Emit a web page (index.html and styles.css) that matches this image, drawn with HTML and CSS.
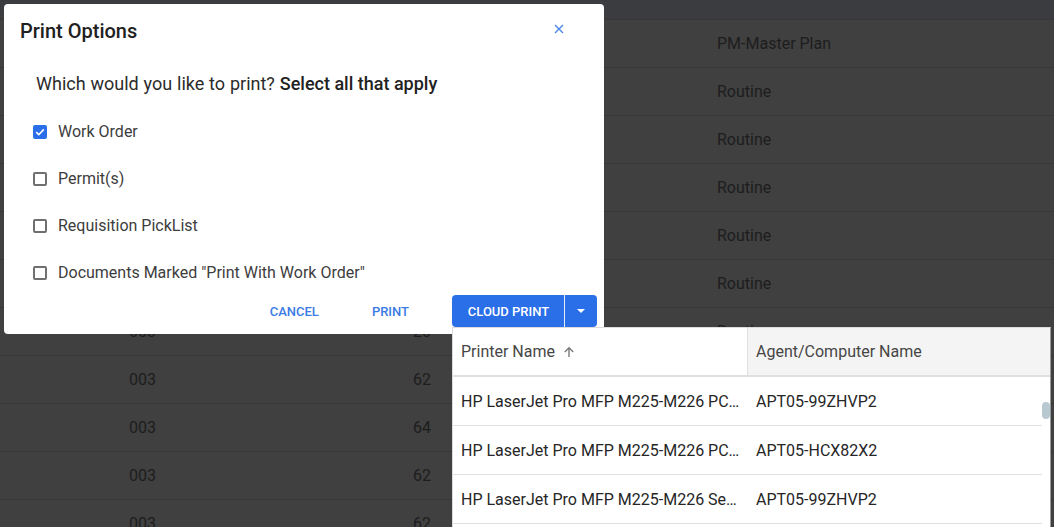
FILE: index.html
```html
<!DOCTYPE html>
<html lang="en">
<head>
<meta charset="utf-8">
<title>Print Options</title>
<link rel="stylesheet" href="styles.css">
</head>
<body>
<div class="page">
  <div class="bg-head"></div>
  <div class="bg-table">
    <div class="bg-row"><span></span><span></span><span class="num"></span><span></span><span>PM-Master Plan</span></div>
    <div class="bg-row"><span></span><span></span><span class="num"></span><span></span><span>Routine</span></div>
    <div class="bg-row"><span></span><span></span><span class="num"></span><span></span><span>Routine</span></div>
    <div class="bg-row"><span></span><span></span><span class="num"></span><span></span><span>Routine</span></div>
    <div class="bg-row"><span></span><span></span><span class="num"></span><span></span><span>Routine</span></div>
    <div class="bg-row"><span></span><span></span><span class="num"></span><span></span><span>Routine</span></div>
    <div class="bg-row"><span></span><span>003</span><span class="num">20</span><span></span><span>Routine</span></div>
    <div class="bg-row"><span></span><span>003</span><span class="num">62</span><span></span><span></span></div>
    <div class="bg-row"><span></span><span>003</span><span class="num">64</span><span></span><span></span></div>
    <div class="bg-row"><span></span><span>003</span><span class="num">62</span><span></span><span></span></div>
    <div class="bg-row"><span></span><span>003</span><span class="num">62</span><span></span><span></span></div>
  </div>

  <div class="dialog">
    <div class="dialog-head">
      <h2 class="dialog-title">Print Options</h2>
      <button class="close-btn" aria-label="Close">
        <svg width="10" height="10" viewBox="0 0 10 10"><path d="M1 1L9 9M9 1L1 9" stroke="#4a87e8" stroke-width="1.4" fill="none"/></svg>
      </button>
    </div>
    <p class="question">Which would you like to print? <strong>Select all that apply</strong></p>
    <ul class="options">
      <li class="option">
        <span class="box checked"><svg width="14" height="14" viewBox="0 0 14 14"><path d="M3.2 7.2L5.8 9.7L10.8 4.4" stroke="#fff" stroke-width="1.6" fill="none"/></svg></span>
        <span class="label">Work Order</span>
      </li>
      <li class="option"><span class="box"></span><span class="label">Permit(s)</span></li>
      <li class="option"><span class="box"></span><span class="label">Requisition PickList</span></li>
      <li class="option"><span class="box"></span><span class="label">Documents Marked "Print With Work Order"</span></li>
    </ul>
    <div class="actions">
      <button class="text-btn cancel">Cancel</button>
      <button class="text-btn print">Print</button>
      <div class="split">
        <button class="split-main">Cloud Print</button>
        <button class="split-toggle" aria-label="More"><span class="caret"></span></button>
      </div>
    </div>
  </div>

  <div class="printer-panel">
    <div class="p-head">
      <div class="p-cell p-name">Printer Name
        <svg class="sort" width="12" height="12" viewBox="0 0 12 12"><path d="M6 11V1.8M1.8 6L6 1.8L10.2 6" stroke="#7a7a7a" stroke-width="1.4" fill="none"/></svg>
      </div>
      <div class="p-cell p-agent">Agent/Computer Name</div>
    </div>
    <div class="p-body">
      <div class="p-row"><div class="p-cell p-name"><span class="trunc">HP LaserJet Pro MFP M225-M226 PCL 6</span></div><div class="p-cell p-agent">APT05-99ZHVP2</div></div>
      <div class="p-row"><div class="p-cell p-name"><span class="trunc">HP LaserJet Pro MFP M225-M226 PCL 6</span></div><div class="p-cell p-agent">APT05-HCX82X2</div></div>
      <div class="p-row"><div class="p-cell p-name"><span class="trunc">HP LaserJet Pro MFP M225-M226 Series</span></div><div class="p-cell p-agent">APT05-99ZHVP2</div></div>
      <div class="thumb"></div>
    </div>
  </div>
</div>
</body>
</html>
```
FILE: styles.css
```css
* { box-sizing: border-box; }
html, body { margin: 0; padding: 0; }
body {
  width: 1054px;
  height: 527px;
  overflow: hidden;
  background: #404040;
  font-family: Roboto, "Liberation Sans", Arial, sans-serif;
}
.page {
  position: relative;
  width: 1054px;
  height: 527px;
  overflow: hidden;
}
.bg-head {
  height: 19px;
  background: #3b3c3f;
}
.bg-row {
  display: grid;
  grid-template-columns: 129px 200px 102px 286px 1fr;
  align-items: center;
  height: 48px;
  border-top: 1px solid #373737;
  font-size: 16px;
  color: #1d1d1d;
}
.bg-row .num { text-align: right; }

/* Dialog */
.dialog {
  position: absolute;
  left: 4px;
  top: 4px;
  width: 600px;
  height: 330px;
  background: #fff;
  border-radius: 4px;
}
.dialog-head {
  display: flex;
  justify-content: space-between;
  align-items: flex-start;
  padding: 15px 33px 0 16px;
}
.dialog-title {
  margin: 0;
  font-size: 20px;
  line-height: 24px;
  font-weight: 500;
  color: #212121;
}
.close-btn {
  width: 24px;
  height: 24px;
  margin-top: -2px;
  padding: 0;
  border: 0;
  background: none;
  display: flex;
  align-items: center;
  justify-content: center;
}
.question {
  margin: 29px 0 12px 32px;
  font-size: 18px;
  line-height: 24px;
  color: #2b2b2b;
  word-spacing: 0.4px;
}
.question strong { font-weight: 500; color: #222; word-spacing: 0; }
.options {
  list-style: none;
  margin: 0;
  padding: 0 0 0 29px;
}
.option {
  display: flex;
  align-items: center;
  gap: 11px;
  height: 47px;
}
.box {
  width: 14px;
  height: 14px;
  border: 2px solid #707070;
  border-radius: 2px;
  flex: none;
}
.box.checked {
  border: 0;
  background: #2b6fe8;
  display: flex;
}
.label {
  font-size: 16px;
  color: #3d3d3d;
}
.actions {
  display: flex;
  justify-content: flex-end;
  align-items: center;
  margin-top: -1px;
  padding-right: 7px;
}
.text-btn {
  height: 32px;
  border: 0;
  background: none;
  font-family: inherit;
  font-size: 13px;
  font-weight: 500;
  text-transform: uppercase;
  color: #3b7be4;
  padding: 0 16px;
}
.cancel { margin-right: 21px; }
.print { margin-right: 27px; }
.split {
  display: flex;
  height: 32px;
}
.split-main, .split-toggle {
  border: 0;
  height: 32px;
  background: #2a6ee8;
  color: #fff;
  font-family: inherit;
  font-size: 13px;
  font-weight: 500;
  text-transform: uppercase;
}
.split-main {
  width: 113px;
  padding: 0 0 0 1px;
  border-radius: 4px 0 0 4px;
  border-right: 1px solid #e6eefc;
}
.split-toggle {
  width: 32px;
  border-radius: 0 4px 4px 0;
  display: flex;
  align-items: center;
  justify-content: center;
  padding: 0;
}
.caret {
  width: 0;
  height: 0;
  border-left: 4px solid transparent;
  border-right: 4px solid transparent;
  border-top: 4px solid #fff;
}

/* Printer panel */
.printer-panel {
  position: absolute;
  left: 452px;
  top: 327px;
  width: 599px;
  height: 220px;
  background: #fff;
  border: 1px solid #dcdcdc;
  border-right-color: #9a9a9a;
}
.p-head {
  display: grid;
  grid-template-columns: 294px 1fr;
  height: 49px;
  border-bottom: 2px solid #e0e0e0;
  font-size: 16px;
  color: #464646;
}
.p-head .p-cell {
  display: flex;
  align-items: center;
}
.p-head .p-name { padding-left: 8px; gap: 8px; }
.p-head .p-agent {
  background: #f4f4f4;
  border-left: 1px solid #e0e0e0;
  padding-left: 8px;
}
.sort { margin-top: 1px; }
.p-body {
  position: relative;
  padding-right: 8px;
}
.p-row {
  display: grid;
  grid-template-columns: 295px 1fr;
  height: 49px;
  border-bottom: 1px solid #e0e0e0;
  font-size: 16px;
  color: #262626;
  align-items: center;
}
.p-row .p-name {
  padding-left: 8px;
  padding-right: 6px;
  min-width: 0;
}
.trunc {
  display: block;
  white-space: nowrap;
  overflow: hidden;
  text-overflow: ellipsis;
}
.p-row .p-agent { padding-left: 8px; }
.thumb {
  position: absolute;
  right: 0;
  top: 25px;
  width: 8px;
  height: 17px;
  border-radius: 4px;
  background: #b9c9d2;
}
```
